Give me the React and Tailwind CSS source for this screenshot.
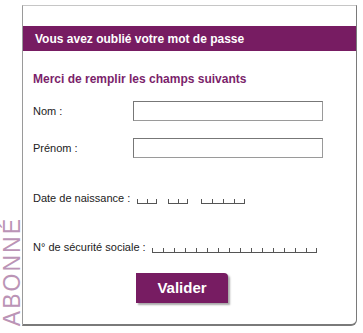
import { useState } from "react";

// Segmented input (bottom line with small ticks)
function Ticks({ count, cell = 10 }) {
  return (
    <div className="flex items-end h-[5px]">
      {Array.from({ length: count }).map((_, i) => (
        <span
          key={i}
          style={{ width: cell }}
          className={
            "h-[5px] border-l border-b border-[#555] " +
            (i === count - 1 ? "border-r" : "")
          }
        />
      ))}
    </div>
  );
}

export default function App() {
  const [nom, setNom] = useState("");
  const [prenom, setPrenom] = useState("");

  return (
    <div className="relative w-[363px] h-[333px] bg-white font-['Liberation_Sans',Arial,sans-serif] text-[11px] text-[#222]">
      {/* Vertical label */}
      <div className="absolute left-[1px] bottom-[7px] [writing-mode:vertical-rl] rotate-180 text-[23px] leading-[22px] tracking-[2px] text-[#bb94b6] font-light">
        ABONNÉ
      </div>

      <div className="absolute left-[22px] top-[5px] w-[335px] h-[321px] border border-t-[#c6c6c6] border-l-[#9a9a9a] border-r-[#7a7a7a] border-b-[#7a7a7a] border-b-2 rounded-br-[6px] flex flex-col">
        <div className="h-[20px]" />
        {/* Header */}
        <div className="h-[25px] bg-[#771c62] flex items-center pl-[12px] text-white font-bold text-[12px]">
          Vous avez oublié votre mot de passe
        </div>

        <div className="flex flex-col pl-[10px] pt-[20px]">
          <div className="text-[#7b1f6b] font-bold text-[12px] leading-[16px]">
            Merci de remplir les champs suivants
          </div>

          {/* Nom */}
          <div className="flex items-center mt-[14px] h-[20px]">
            <span className="w-[100px]">Nom :</span>
            <input
              value={nom}
              onChange={(e) => setNom(e.target.value)}
              className="w-[190px] h-[20px] border border-[#9a9a9a] border-t-[#777] border-l-[#777] outline-none px-1"
            />
          </div>

          {/* Prénom */}
          <div className="flex items-center mt-[17px] h-[20px]">
            <span className="w-[100px]">Prénom :</span>
            <input
              value={prenom}
              onChange={(e) => setPrenom(e.target.value)}
              className="w-[190px] h-[20px] border border-[#9a9a9a] border-t-[#777] border-l-[#777] outline-none px-1"
            />
          </div>

          {/* Date de naissance */}
          <div className="flex items-center mt-[32px] h-[16px]">
            <span className="mr-[7px]">Date de naissance :</span>
            <div className="flex items-end pt-[6px]">
              <Ticks count={2} cell={10} />
              <div className="w-[11px]" />
              <Ticks count={2} cell={10} />
              <div className="w-[13px]" />
              <Ticks count={4} cell={11} />
            </div>
          </div>

          {/* Sécurité sociale */}
          <div className="flex items-center mt-[33px] h-[16px]">
            <span className="mr-[6px]">N° de sécurité sociale :</span>
            <div className="pt-[6px]">
              <Ticks count={15} cell={11} />
            </div>
          </div>

          {/* Button */}
          <div className="flex mt-[18px] pl-[103px]">
            <button className="w-[92px] h-[30px] bg-[#771c62] text-white font-bold text-[15px] rounded-tr-[4px] shadow-[2px_2px_2px_rgba(0,0,0,0.35)]">
              Valider
            </button>
          </div>
        </div>
      </div>
    </div>
  );
}
